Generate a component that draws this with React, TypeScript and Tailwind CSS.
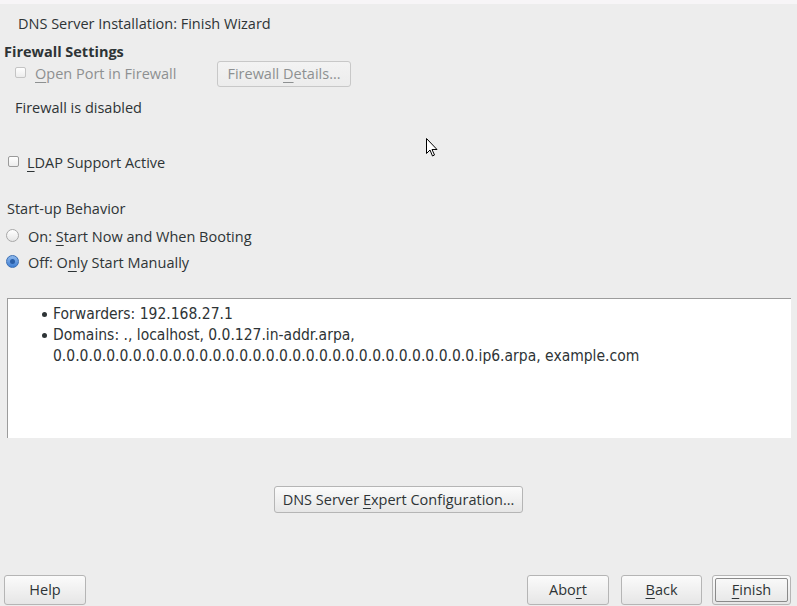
import React from 'react';

const font = { fontFamily: '"Open Sans", "DejaVu Sans", sans-serif' };

function Btn({
  children,
  className = '',
  focused = false,
}: {
  children: React.ReactNode;
  className?: string;
  focused?: boolean;
}) {
  return (
    <div
      className={`flex items-center justify-center rounded-[3px] border border-[#b5b5b5] bg-gradient-to-b from-[#fbfbfb] to-[#e6e6e6] text-[14.5px] text-[#2e3436] ${className}`}
    >
      {focused ? (
        <div className="flex h-[calc(100%-4px)] w-[calc(100%-4px)] items-center justify-center rounded-[2px] border border-[#8a8a8a]">
          {children}
        </div>
      ) : (
        children
      )}
    </div>
  );
}

function U({ children }: { children: React.ReactNode }) {
  return <span className="underline underline-offset-[3px]">{children}</span>;
}

function Checkbox({ disabled = false }: { disabled?: boolean }) {
  return (
    <div
      className={`h-[11px] w-[11px] rounded-[2px] border bg-gradient-to-b from-white to-[#ececec] ${
        disabled ? 'border-[#c4c4c4]' : 'border-[#9a9a9a]'
      }`}
    />
  );
}

function Radio({ checked = false }: { checked?: boolean }) {
  return (
    <div
      className={`flex h-[13px] w-[13px] items-center justify-center rounded-full border ${
        checked
          ? 'border-[#3b6fb4] bg-gradient-to-b from-[#8fb9ec] to-[#3f7fd4]'
          : 'border-[#a8a8a8] bg-gradient-to-b from-white to-[#e6e6e6]'
      }`}
    >
      {checked && <div className="h-[5px] w-[5px] rounded-full bg-[#2a5fa8]" />}
    </div>
  );
}

export default function App() {
  return (
    <div
      className="relative flex h-[606px] w-[797px] flex-col overflow-hidden bg-[#ededed] text-[14.5px] text-[#2e3436]"
      style={font}
    >
      <div className="h-[4px] bg-[#f7f5f7]" />

      {/* Title */}
      <div className="mt-[10px] h-[20px] pl-[18px] leading-[20px]">
        DNS Server Installation: Finish Wizard
      </div>

      {/* Firewall */}
      <div className="mt-[8px] h-[19px] pl-[4px] font-bold leading-[19px]">
        Firewall Settings
      </div>
      <div className="flex h-[26px] items-center">
        <div className="ml-[15px] mr-[9px] -mt-[4px]">
          <Checkbox disabled />
        </div>
        <span className="text-[#8d9091]">
          <U>O</U>pen Port in Firewall
        </span>
        <Btn className="ml-auto mr-[446px] h-[26px] w-[134px] !text-[#8d9091] !from-[#f3f3f3] !to-[#ececec] border-[#c8c8c8]">
          <span>
            Firewall <U>D</U>etails...
          </span>
        </Btn>
      </div>
      <div className="mt-[11px] h-[20px] pl-[15px] leading-[20px]">
        Firewall is disabled
      </div>

      {/* LDAP */}
      <div className="mt-[35px] flex h-[20px] items-center">
        <div className="ml-[8px] mr-[8px] -mt-[3px]">
          <Checkbox />
        </div>
        <span>
          <U>L</U>DAP Support Active
        </span>
      </div>

      {/* Start-up */}
      <div className="mt-[26px] h-[20px] pl-[7px] leading-[20px]">
        Start-up Behavior
      </div>
      <div className="mt-[8px] flex h-[20px] items-center">
        <div className="ml-[6px] mr-[9px] -mt-[3px]">
          <Radio />
        </div>
        <span>
          On: <U>S</U>tart Now and When Booting
        </span>
      </div>
      <div className="mt-[6px] flex h-[20px] items-center">
        <div className="ml-[6px] mr-[9px] -mt-[3px]">
          <Radio checked />
        </div>
        <span>
          Off: O<U>n</U>ly Start Manually
        </span>
      </div>

      {/* Summary */}
      <div className="ml-[7px] mt-[25px] h-[140px] w-[784px] border-l border-t border-[#9c9c9c] bg-white pt-[5px] pl-[34px] text-[15.5px] leading-[21px] text-[#2e3436]">
        <div
          style={{ fontFamily: '"DejaVu Sans Condensed", "Liberation Sans Narrow", "DejaVu Sans", sans-serif', fontStretch: 'condensed' }}
        >
          <div className="flex">
            <span className="flex h-[21px] w-[11px] items-center">
              <span className="h-[5px] w-[5px] rounded-full bg-[#2e3436]" />
            </span>
            <span>Forwarders: 192.168.27.1</span>
          </div>
          <div className="flex">
            <span className="flex h-[21px] w-[11px] items-center">
              <span className="h-[5px] w-[5px] rounded-full bg-[#2e3436]" />
            </span>
            <span>
              Domains: ., localhost, 0.0.127.in-addr.arpa,
              <br />
              0.0.0.0.0.0.0.0.0.0.0.0.0.0.0.0.0.0.0.0.0.0.0.0.0.0.0.0.0.0.0.0.ip6.arpa, example.com
            </span>
          </div>
        </div>
      </div>

      {/* Expert */}
      <div className="mt-[48px] flex justify-center">
        <Btn className="h-[27px] w-[249px]">
          <span>
            DNS Server <U>E</U>xpert Configuration...
          </span>
        </Btn>
      </div>

      {/* Bottom buttons */}
      <div className="mt-[62px] flex h-[30px] items-stretch pl-[4px]">
        <Btn className="w-[82px]">Help</Btn>
        <Btn className="ml-auto w-[82px]">
          <span>
            Abo<U>r</U>t
          </span>
        </Btn>
        <Btn className="ml-[12px] w-[81px]">
          <span>
            <U>B</U>ack
          </span>
        </Btn>
        <Btn className="ml-[10px] mr-[6px] w-[79px]" focused>
          <span>
            <U>F</U>inish
          </span>
        </Btn>
      </div>

      {/* mouse pointer */}
      <svg
        className="absolute left-[426px] top-[138px]"
        width="13"
        height="20"
        viewBox="0 0 13 20"
      >
        <path
          d="M0.5 0.5 L0.5 15.5 L4 12 L6.5 18 L8.5 17 L6 11.5 L11 11.5 Z"
          fill="#fff"
          stroke="#000"
          strokeWidth="1"
        />
      </svg>
    </div>
  );
}
